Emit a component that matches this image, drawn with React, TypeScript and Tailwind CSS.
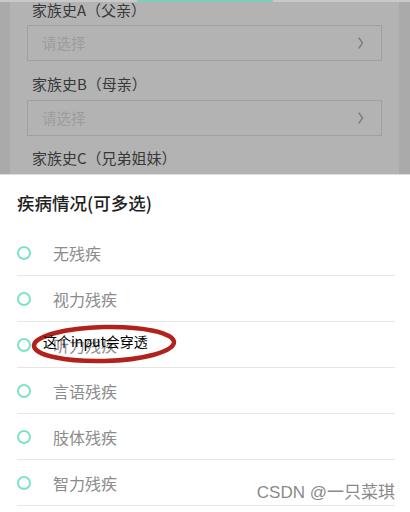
import React from "react";

const font = { fontFamily: '"Noto Sans CJK SC", "Noto Sans", sans-serif' };

function Chevron() {
  return (
    <svg width="6" height="12" viewBox="0 0 6 12" className="block">
      <path d="M1 1 L4.5 6 L1 11" fill="none" stroke="#7d7d7d" strokeWidth="1.4" strokeLinecap="round" strokeLinejoin="round" />
    </svg>
  );
}

function SelectBox() {
  return (
    <div className="mx-[17px] h-[36px] border border-[#a0a0a0] flex items-center justify-between pl-[14px] pr-[17px]">
      <span className="text-[14.5px] text-[#9c9c9c] leading-none">请选择</span>
      <Chevron />
    </div>
  );
}

const options = ["无残疾", "视力残疾", "听力残疾", "言语残疾", "肢体残疾", "智力残疾"];

export default function App() {
  return (
    <div className="w-[410px] h-[512px] overflow-hidden bg-white relative" style={font}>
      {/* dimmed background page */}
      <div className="h-[174px] bg-[#aaaaaa] flex relative">
        <div className="absolute left-0 right-0 top-0 h-[2px] bg-[#c9c9c9]" />
        <div className="absolute left-[137px] top-0 h-[2px] w-[136px] bg-[#7ccfba]" />
        <div className="ml-[10px] w-[389px] bg-[#b3b3b3] flex flex-col">
          <div className="h-[20px] pl-[22px] text-[15px] leading-[20px] text-[#383838]">家族史A（父亲）</div>
          <div className="mt-[5px]"><SelectBox /></div>
          <div className="mt-[13px] h-[20px] pl-[22px] text-[15px] leading-[20px] text-[#383838]">家族史B（母亲）</div>
          <div className="mt-[6px]"><SelectBox /></div>
          <div className="mt-[12px] h-[20px] pl-[22px] text-[15px] leading-[20px] text-[#383838]">家族史C（兄弟姐妹）</div>
        </div>
      </div>
      {/* bottom sheet */}
      <div className="border-t border-[#dedede] bg-white">
        <div className="pt-[16px] pl-[17px] h-[55px] text-[17.5px] leading-[24px] font-medium text-[#1e1e1e]">疾病情况(可多选)</div>
        <div className="mx-[17px] w-[378px]">
          {options.map((o) => (
            <div key={o} className="h-[46px] border-b border-[#e6e6e6] flex items-center">
              <div className="w-[14px] h-[14px] rounded-full border-2 border-[#7ee2cb]" />
              <span className="ml-[22px] text-[16px] text-[#8c8c8c] leading-none">{o}</span>
            </div>
          ))}
        </div>
      </div>
      {/* annotation */}
      <svg className="absolute left-[28px] top-[320px]" width="154" height="48" viewBox="0 0 154 48">
        <ellipse cx="76" cy="24" rx="70" ry="17" transform="rotate(-1.5 76 24)" fill="none" stroke="#b3211d" strokeWidth="4.5" />
      </svg>
      <div className="absolute left-[43px] top-[331px] text-[14px] leading-[20px] text-black">这个input会穿透</div>
      {/* watermark */}
      <div className="absolute right-[15px] top-[482px] text-[17px] leading-[22px] text-[#8a8a8a]" style={{ fontFamily: '"Liberation Sans", "Noto Sans CJK SC", sans-serif' }}>
        CSDN @一只菜琪
      </div>
    </div>
  );
}
